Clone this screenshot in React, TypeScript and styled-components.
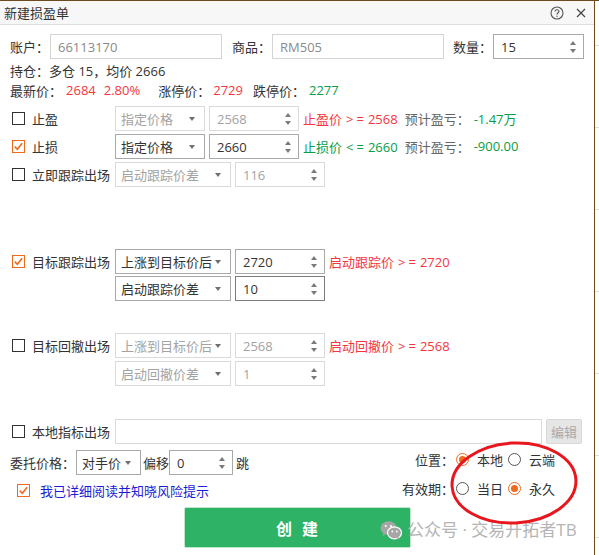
import React from "react";
import styled, { createGlobalStyle, css } from "styled-components";

const GlobalStyle = createGlobalStyle`
  html, body { margin: 0; padding: 0; background: #fff; }
  body {
    font-family: "Open Sans", "Noto Sans CJK SC", sans-serif;
    font-size: 13px;
    color: #333;
  }
  * { box-sizing: border-box; }
`;

const RED = "#f5363f";
const GREEN = "#0a9e44";
const ORANGE = "#ee6a1c";
const BROWN = "#6d4b1f";

const Frame = styled.div`
  width: 599px;
  height: 555px;
  display: flex;
  border-top: 1px solid ${BROWN};
  position: relative;
  overflow: hidden;
  background: #fff;
`;

const Dialog = styled.div`
  width: 595px;
  flex: none;
  border-right: 1px solid ${BROWN};
  display: flex;
  flex-direction: column;
  background: #fff;
`;

const SideStrip = styled.div`
  flex: 1;
  background: repeating-linear-gradient(
    to bottom,
    #fff 0 44px,
    #dcdcdc 44px 45px,
    #fff 45px 82px
  );
`;

const TitleBar = styled.div`
  height: 24px;
  flex: none;
  display: flex;
  align-items: center;
  padding: 0 8px 0 4px;
  background: #f7f7f7;
  border-bottom: 1px solid #dedede;
`;

const Title = styled.span`
  font-size: 13px;
  color: #333;
  line-height: 20px;
`;

const TitleTools = styled.div`
  margin-left: auto;
  display: flex;
  align-items: center;
  gap: 12px;
`;

const Body = styled.div`
  padding: 9px 10px 0 10px;
  display: flex;
  flex-direction: column;
`;

const Row = styled.div<{ $mt?: number; $h?: number }>`
  display: flex;
  align-items: center;
  height: ${(p) => p.$h ?? 25}px;
  margin-top: ${(p) => p.$mt ?? 0}px;
  white-space: nowrap;
`;

const Label = styled.span<{ $w?: number; $ml?: number; $right?: boolean }>`
  display: inline-block;
  width: ${(p) => (p.$w ? `${p.$w}px` : "auto")};
  margin-left: ${(p) => p.$ml ?? 0}px;
  text-align: ${(p) => (p.$right ? "right" : "left")};
  color: #333;
  flex: none;
`;

const Colored = styled.span<{ $c?: string; $ml?: number }>`
  color: ${(p) => p.$c ?? "#333"};
  margin-left: ${(p) => p.$ml ?? 0}px;
`;

type FieldState = "disabled" | "enabled" | "focus" | "readonly";

const Field = styled.div<{ $w: number; $state: FieldState; $ml?: number; $pl?: number }>`
  width: ${(p) => p.$w}px;
  height: 25px;
  flex: none;
  margin-left: ${(p) => p.$ml ?? 0}px;
  display: flex;
  align-items: center;
  padding-left: ${(p) => p.$pl ?? 7}px;
  background: #fff;
  ${(p) =>
    p.$state === "disabled" &&
    css`
      border: 1px solid #dadada;
      color: #a3a3a3;
    `}
  ${(p) =>
    p.$state === "readonly" &&
    css`
      border: 1px solid #d4d4d4;
      color: #8a8a8a;
    `}
  ${(p) =>
    p.$state === "enabled" &&
    css`
      border: 1px solid #a9a9a9;
      color: #333;
    `}
  ${(p) =>
    p.$state === "focus" &&
    css`
      border: 1px solid #7c7c7c;
      color: #333;
    `}
`;

const Caret = styled.span`
  margin-left: auto;
  margin-right: 9px;
  width: 0;
  height: 0;
  border-left: 3.5px solid transparent;
  border-right: 3.5px solid transparent;
  border-top: 4px solid #6f6f6f;
`;

const SpinArrows = styled.span`
  margin-left: auto;
  margin-right: 7px;
  display: flex;
  flex-direction: column;
  gap: 4px;
`;

const Tri = styled.span<{ $up?: boolean }>`
  width: 0;
  height: 0;
  border-left: 3.5px solid transparent;
  border-right: 3.5px solid transparent;
  ${(p) =>
    p.$up
      ? css`border-bottom: 4px solid #7a7a7a;`
      : css`border-top: 4px solid #7a7a7a;`}
`;

const CheckLabel = styled.label`
  width: 105px;
  flex: none;
  display: flex;
  align-items: center;
  padding-left: 2px;
  gap: 7px;
  color: #333;
`;

const Box = styled.span<{ $checked?: boolean }>`
  width: 13px;
  height: 13px;
  flex: none;
  display: inline-flex;
  align-items: center;
  justify-content: center;
  border: 1px solid ${(p) => (p.$checked ? ORANGE : "#333")};
  background: #fff;
`;

const Radio = styled.span<{ $checked?: boolean }>`
  width: 13px;
  height: 13px;
  flex: none;
  border-radius: 50%;
  border: 1px solid ${(p) => (p.$checked ? ORANGE : "#555")};
  display: inline-flex;
  align-items: center;
  justify-content: center;
  &::after {
    content: "";
    width: 7px;
    height: 7px;
    border-radius: 50%;
    background: ${(p) => (p.$checked ? ORANGE : "transparent")};
  }
`;

const RadioOption = styled.span<{ $ml?: number }>`
  display: inline-flex;
  align-items: center;
  gap: 8px;
  width: 52px;
  margin-left: ${(p) => p.$ml ?? 0}px;
  color: #333;
`;

const Notes = styled.span`
  margin-left: 4px;
  display: inline-flex;
  gap: 7px;
`;

const Op = styled.span`
  letter-spacing: 3px;
  margin: 0 1px 0 4px;
`;

const EditButton = styled.div`
  width: 36px;
  height: 25px;
  margin-left: 4px;
  flex: none;
  display: flex;
  align-items: center;
  justify-content: center;
  background: #e6e6e6;
  border: 1px solid #d9d9d9;
  border-radius: 2px;
  color: #a9a9a9;
`;

const Split = styled.div`
  display: flex;
  align-items: center;
  justify-content: space-between;
`;

const RadioField = styled.div`
  display: flex;
  align-items: center;
  padding-right: 24px;
`;

const Agree = styled.label`
  display: flex;
  align-items: center;
  gap: 10px;
  margin-left: 7px;
  color: #1c1cd6;
`;

const ButtonRow = styled.div`
  display: flex;
  justify-content: center;
  margin-top: 6px;
`;

const CreateButton = styled.div`
  width: 227px;
  height: 41px;
  display: flex;
  align-items: center;
  justify-content: center;
  background: #2db266;
  border: 1px solid #bfe3cb;
  border-radius: 2px;
  color: #fff;
  font-size: 16px;
  font-weight: 700;
  letter-spacing: 10px;
  padding-left: 10px;
`;

const Watermark = styled.div`
  position: absolute;
  left: 380px;
  top: 518px;
  display: flex;
  align-items: center;
  gap: 5px;
  color: #b4b4b4;
  font-size: 17px;
  line-height: 22px;
  pointer-events: none;
`;

const Annotation = styled.svg`
  position: absolute;
  left: 448px;
  top: 439px;
  pointer-events: none;
`;

const Check = () => (
  <svg width="11" height="11" viewBox="0 0 11 11">
    <path d="M1.8 5.6 L4.3 8.2 L9.2 2.2" fill="none" stroke={ORANGE} strokeWidth="1.6" />
  </svg>
);

const CheckBox = ({ checked }: { checked?: boolean }) => (
  <Box $checked={checked}>{checked && <Check />}</Box>
);

const Select = ({ w, state, text, ml, pl = 5 }: { w: number; state: FieldState; text: string; ml?: number; pl?: number }) => (
  <Field $w={w} $state={state} $ml={ml} $pl={pl}>
    <span>{text}</span>
    <Caret />
  </Field>
);

const Spin = ({ w, state, text, ml }: { w: number; state: FieldState; text: string; ml?: number }) => (
  <Field $w={w} $state={state} $ml={ml}>
    <span>{text}</span>
    <SpinArrows>
      <Tri $up />
      <Tri />
    </SpinArrows>
  </Field>
);

const HelpIcon = () => (
  <svg width="14" height="14" viewBox="0 0 14 14">
    <circle cx="7" cy="7" r="6" fill="none" stroke="#555" strokeWidth="1.1" />
    <path d="M5 5.4 C5 3.2 9 3.2 9 5.3 C9 6.7 7 6.8 7 8.4" fill="none" stroke="#555" strokeWidth="1.1" />
    <circle cx="7" cy="10.3" r="0.7" fill="#555" />
  </svg>
);

const CloseIcon = () => (
  <svg width="10" height="10" viewBox="0 0 10 10">
    <path d="M1 1 L9 9 M9 1 L1 9" stroke="#444" strokeWidth="1.2" />
  </svg>
);

const WeChat = () => (
  <svg width="22" height="20" viewBox="0 0 22 20">
    <ellipse cx="8.5" cy="8" rx="8" ry="6.8" fill="#a6a6a6" />
    <path d="M3.5 13 L2.5 16 L6.5 14 Z" fill="#a6a6a6" />
    <ellipse cx="14.5" cy="12.8" rx="7" ry="6" fill="#a6a6a6" stroke="#fff" strokeWidth="1.2" />
    <path d="M18.5 17 L20 19.4 L16 18 Z" fill="#a6a6a6" />
    <circle cx="5.8" cy="6" r="1.1" fill="#fff" />
    <circle cx="11" cy="6" r="1.1" fill="#fff" />
    <circle cx="12.3" cy="11.5" r="0.9" fill="#fff" />
    <circle cx="16.8" cy="11.5" r="0.9" fill="#fff" />
  </svg>
);

type Opt = {
  label: string;
  checked?: boolean;
  sel: string;
  selW: number;
  selState: FieldState;
  spin: string;
  spinW: number;
  spinState: FieldState;
  mt: number;
  notes?: React.ReactNode;
};

const OptionRow = ({ o }: { o: Opt }) => (
  <Row $mt={o.mt}>
    <CheckLabel>
      {o.label && <CheckBox checked={o.checked} />}
      {o.label}
    </CheckLabel>
    <Select w={o.selW} state={o.selState} text={o.sel} />
    <Spin w={o.spinW} state={o.spinState} text={o.spin} ml={4} />
    {o.notes && <Notes>{o.notes}</Notes>}
  </Row>
);

const options: Opt[] = [
  {
    label: "止盈", sel: "指定价格", selW: 90, selState: "disabled", spin: "2568", spinW: 90, spinState: "disabled", mt: 6,
    notes: (<><Colored $c={RED}>止盈价<Op>&gt;=</Op>2568</Colored><Colored $c="#666">预计盈亏：</Colored><Colored $c={GREEN} $ml={-3}>-1.47万</Colored></>),
  },
  {
    label: "止损", checked: true, sel: "指定价格", selW: 90, selState: "enabled", spin: "2660", spinW: 90, spinState: "enabled", mt: 3,
    notes: (<><Colored $c={GREEN}>止损价<Op>&lt;=</Op>2660</Colored><Colored $c="#666">预计盈亏：</Colored><Colored $c={GREEN} $ml={-3}>-900.00</Colored></>),
  },
  { label: "立即跟踪出场", sel: "启动跟踪价差", selW: 116, selState: "disabled", spin: "116", spinW: 90, spinState: "disabled", mt: 3 },
  {
    label: "目标跟踪出场", checked: true, sel: "上涨到目标价后", selW: 116, selState: "enabled", spin: "2720", spinW: 90, spinState: "enabled", mt: 62,
    notes: <Colored $c={RED}>启动跟踪价<Op>&gt;=</Op>2720</Colored>,
  },
  { label: "", sel: "启动跟踪价差", selW: 116, selState: "enabled", spin: "10", spinW: 90, spinState: "focus", mt: 2 },
  {
    label: "目标回撤出场", sel: "上涨到目标价后", selW: 116, selState: "disabled", spin: "2568", spinW: 90, spinState: "disabled", mt: 32,
    notes: <Colored $c={RED}>启动回撤价<Op>&gt;=</Op>2568</Colored>,
  },
  { label: "", sel: "启动回撤价差", selW: 116, selState: "disabled", spin: "1", spinW: 90, spinState: "disabled", mt: 3 },
];

export default function App() {
  return (
    <>
      <GlobalStyle />
      <Frame>
        <Dialog>
          <TitleBar>
            <Title>新建损盈单</Title>
            <TitleTools>
              <HelpIcon />
              <CloseIcon />
            </TitleTools>
          </TitleBar>
          <Body>
            <Row>
              <Label $w={40}>账户：</Label>
              <Field $w={172} $state="readonly">66113170</Field>
              <Label $w={40} $ml={10}>商品：</Label>
              <Field $w={172} $state="readonly">RM505</Field>
              <Label $w={40} $ml={9}>数量：</Label>
              <Spin w={91} state="enabled" text="15" />
            </Row>
            <Row $h={20} $mt={1}>
              <Label>持仓：多仓 15，均价 2666</Label>
            </Row>
            <Row $h={20}>
              <Label>最新价：</Label>
              <Colored $c={RED} $ml={4}>2684</Colored>
              <Colored $c={RED} $ml={8}>2.80%</Colored>
              <Label $ml={18}>涨停价：</Label>
              <Colored $c={RED} $ml={3}>2729</Colored>
              <Label $ml={10}>跌停价：</Label>
              <Colored $c={GREEN} $ml={4}>2277</Colored>
            </Row>
            {options.map((o, i) => (
              <OptionRow key={i} o={o} />
            ))}
            <Row $mt={33}>
              <CheckLabel>
                <CheckBox />
                本地指标出场
              </CheckLabel>
              <Field $w={427} $state="disabled" />
              <EditButton>编辑</EditButton>
            </Row>
            <Split>
              <Row $mt={6}>
                <Label $w={66}>委托价格：</Label>
                <Select w={65} state="enabled" text="对手价" />
                <Label $ml={2}>偏移</Label>
                <Spin w={64} state="enabled" text="0" />
                <Label $ml={3}>跳</Label>
              </Row>
              <RadioField>
                <Label $w={60} $right>位置：</Label>
                <RadioOption $ml={2}>
                  <Radio $checked />本地
                </RadioOption>
                <RadioOption>
                  <Radio />云端
                </RadioOption>
              </RadioField>
            </Split>
            <Split>
              <Row $mt={4} $h={22}>
                <Agree>
                  <CheckBox checked />
                  我已详细阅读并知晓风险提示
                </Agree>
              </Row>
              <RadioField>
                <Label $w={60} $right>有效期：</Label>
                <RadioOption $ml={2}>
                  <Radio />当日
                </RadioOption>
                <RadioOption>
                  <Radio $checked />永久
                </RadioOption>
              </RadioField>
            </Split>
            <ButtonRow>
              <CreateButton>创建</CreateButton>
            </ButtonRow>
          </Body>
        </Dialog>
        <SideStrip />
        <Watermark>
          <WeChat />
          <span>公众号 · 交易开拓者TB</span>
        </Watermark>
        <Annotation width="134" height="88" viewBox="0 0 134 88">
          <ellipse cx="66" cy="43" rx="62" ry="40" fill="none" stroke="#e8161d" strokeWidth="3" transform="rotate(-3 66 43)" />
        </Annotation>
      </Frame>
    </>
  );
}
